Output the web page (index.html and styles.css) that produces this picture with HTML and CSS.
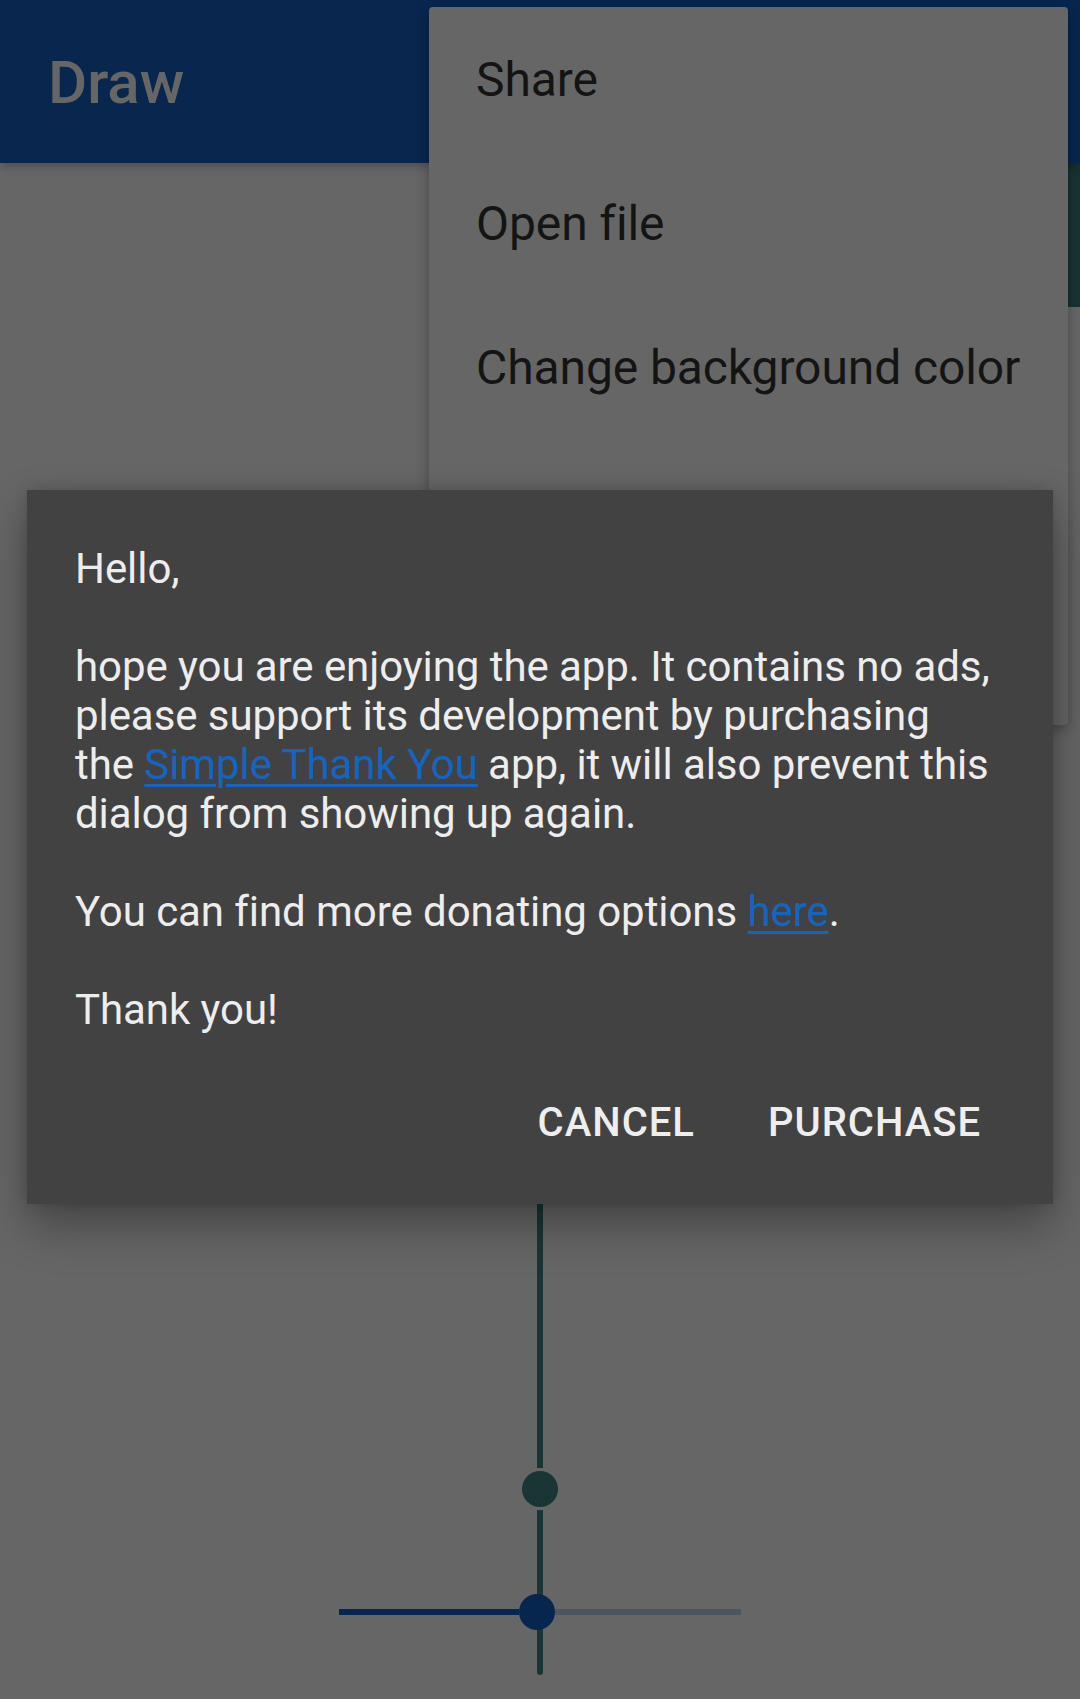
FILE: index.html
```html
<!DOCTYPE html>
<html lang="en">
<head>
<meta charset="utf-8">
<title>Draw</title>
<link rel="stylesheet" href="styles.css">
</head>
<body>
<div class="screen">
  <header class="appbar">
    <h1 class="appbar-title">Draw</h1>
  </header>
  <main class="canvas">
    <div class="swatch"></div>
    <div class="controls">
      <div class="vslider">
        <div class="vtrack vtrack-top"></div>
        <div class="thumb thumb-teal"></div>
        <div class="vtrack vtrack-bottom"></div>
      </div>
      <div class="hslider">
        <div class="htrack htrack-active"></div>
        <div class="thumb thumb-blue"></div>
        <div class="htrack htrack-rest"></div>
      </div>
    </div>
  </main>

  <ul class="menu">
    <li class="menu-item">Share</li>
    <li class="menu-item">Open file</li>
    <li class="menu-item">Change background color</li>
  </ul>

  <section class="dialog">
    <p class="dialog-message">Hello,<br><br>hope you are enjoying the app. It contains no ads,<br>please support its development by purchasing<br>the <a class="link" href="#">Simple Thank You</a> app, it will also prevent this<br>dialog from showing up again.<br><br>You can find more donating options <a class="link" href="#">here</a>.<br><br>Thank you!</p>
    <div class="dialog-actions">
      <button class="dialog-btn">CANCEL</button>
      <button class="dialog-btn">PURCHASE</button>
    </div>
  </section>
</div>
</body>
</html>
```

FILE: styles.css
```css
* { box-sizing: border-box; }

html, body {
  margin: 0;
  padding: 0;
  background: #666666;
}

body {
  font-family: Roboto, "Noto Sans", "Liberation Sans", sans-serif;
}

.screen {
  position: relative;
  width: 1080px;
  height: 1699px;
  overflow: hidden;
  display: flex;
  flex-direction: column;
  background: #666666;
}

.appbar {
  height: 163px;
  flex: 0 0 163px;
  background: #08264e;
  display: flex;
  align-items: center;
  padding-left: 48px;
  box-shadow: 0 4px 8px rgba(0, 0, 0, 0.22);
  position: relative;
  z-index: 1;
}

.appbar-title {
  margin: 0;
  font-size: 60px;
  font-weight: 500;
  color: #666666;
  line-height: 1;
  padding-top: 2px;
}

.canvas {
  flex: 1;
  display: flex;
  flex-direction: column;
}

.swatch {
  align-self: flex-end;
  width: 144px;
  height: 144px;
  background: #1a3233;
}

.controls {
  margin-top: auto;
  margin-bottom: 24px;
  align-self: center;
  width: 402px;
  height: 575px;
  display: grid;
}

.vslider,
.hslider {
  grid-area: 1 / 1;
}

.vslider {
  justify-self: center;
  width: 36px;
  display: flex;
  flex-direction: column;
  align-items: center;
  gap: 3px;
}

.vtrack {
  width: 6px;
  background: #1a3535;
}

.vtrack-top {
  flex: 1;
}

.vtrack-bottom {
  height: 165px;
  border-radius: 0 0 3px 3px;
}

.thumb {
  width: 36px;
  height: 36px;
  border-radius: 50%;
  flex: 0 0 36px;
}

.thumb-teal {
  background: #1a3535;
}

.thumb-blue {
  background: #07264f;
}

.hslider {
  align-self: end;
  margin-bottom: 45px;
  height: 36px;
  display: flex;
  align-items: center;
}

.htrack {
  height: 6px;
}

.htrack-active {
  width: 180px;
  background: #07264f;
}

.htrack-rest {
  flex: 1;
  background: #4c5661;
}

/* overflow menu */
.menu {
  position: absolute;
  left: 429px;
  top: 7px;
  width: 639px;
  height: 718px;
  margin: 0;
  padding: 0;
  list-style: none;
  background: #666666;
  border-radius: 4px;
  box-shadow: 0 4px 14px rgba(0, 0, 0, 0.3);
  z-index: 2;
}

.menu-item {
  height: 144px;
  display: flex;
  align-items: center;
  padding-left: 47px;
  font-size: 48px;
  letter-spacing: -0.1px;
  color: #141414;
}

/* dialog */
.dialog {
  position: absolute;
  left: 27px;
  top: 490px;
  width: 1026px;
  height: 714px;
  background: #424242;
  padding: 54px 49px 0 48px;
  box-shadow: 0 22px 44px rgba(0, 0, 0, 0.32), 0 0 14px rgba(0, 0, 0, 0.15);
  z-index: 3;
}

.dialog-message {
  margin: 0;
  font-size: 42px;
  line-height: 49px;
  letter-spacing: -0.07px;
  color: #ededed;
  white-space: nowrap;
}

.link {
  color: #1565c0;
  text-decoration: underline;
  text-decoration-thickness: 3px;
  text-underline-offset: 5px;
}

.dialog-actions {
  margin-top: 65px;
  display: flex;
  justify-content: flex-end;
  gap: 73px;
  padding-right: 23px;
}

.dialog-btn {
  border: 0;
  padding: 0;
  margin: 0;
  background: transparent;
  font-family: Roboto, "Noto Sans", "Liberation Sans", sans-serif;
  font-size: 40px;
  font-weight: 500;
  line-height: 47px;
  color: #eeeeee;
  letter-spacing: 0.025em;
}
```
